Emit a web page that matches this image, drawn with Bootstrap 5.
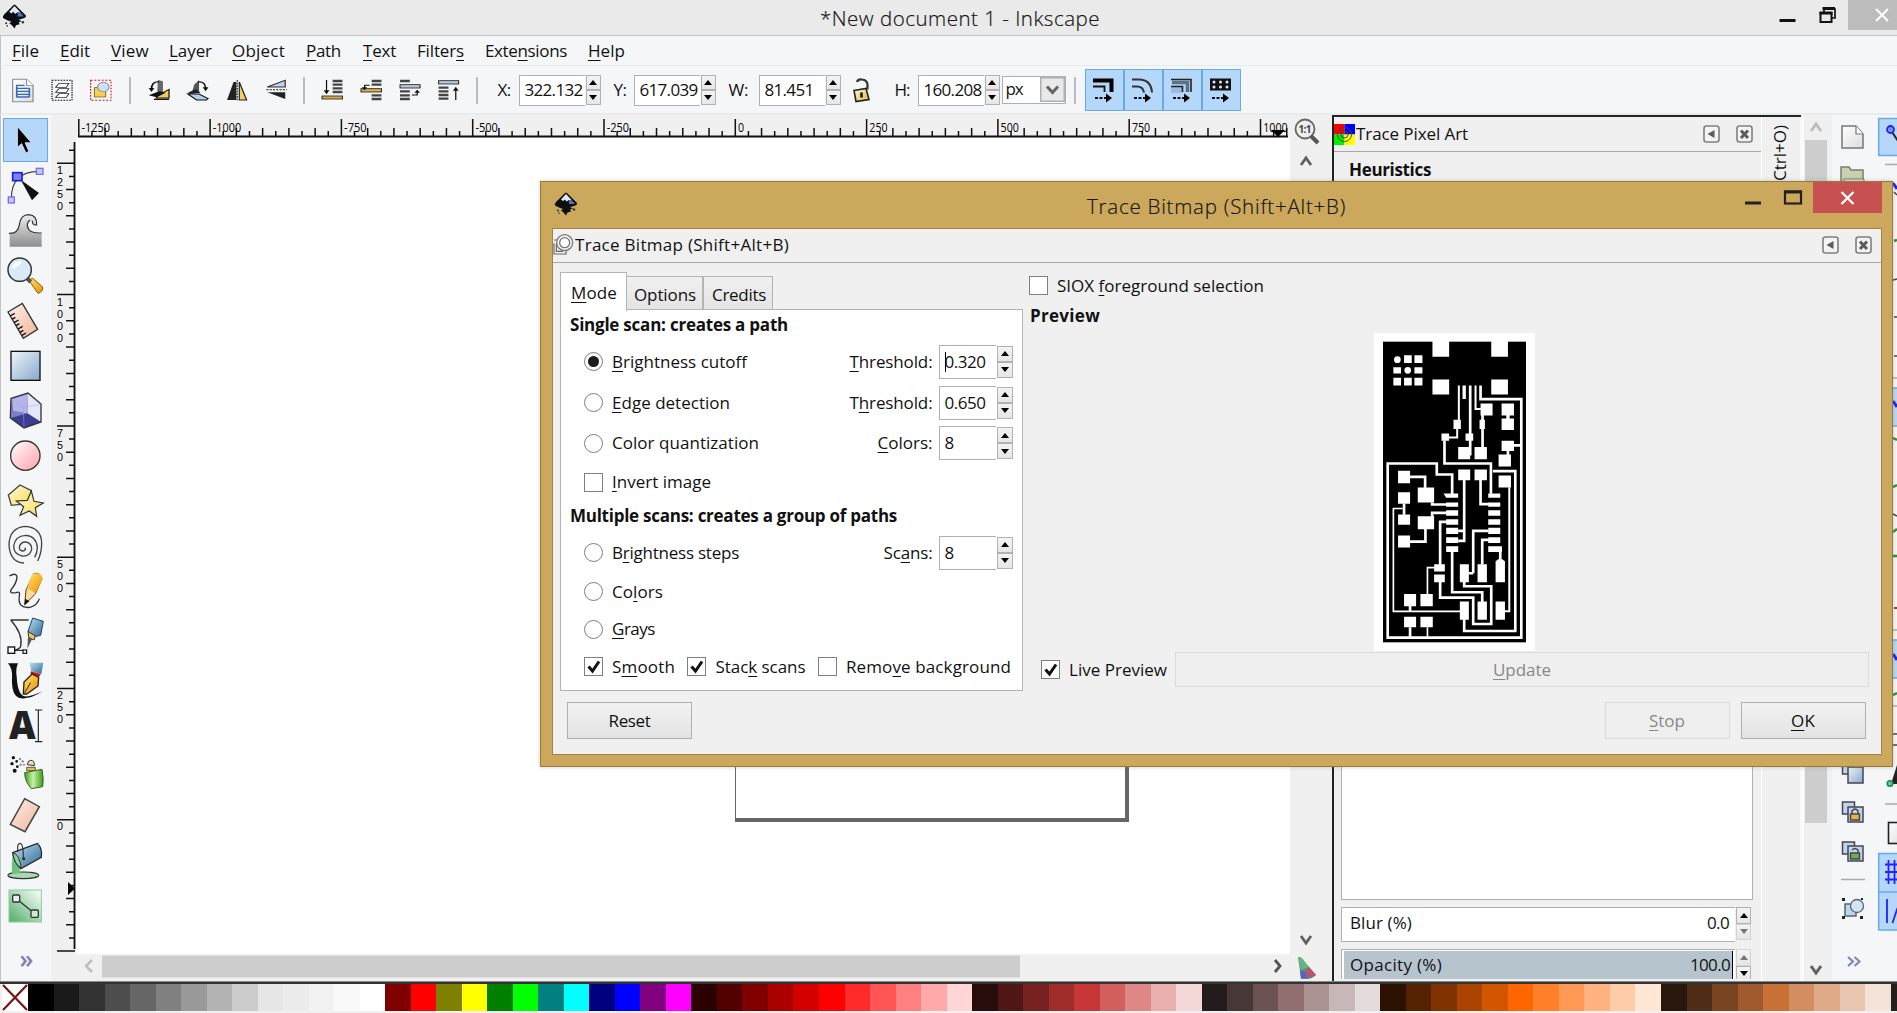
<!DOCTYPE html>
<html lang="en">
<head>
<meta charset="utf-8">
<title>*New document 1 - Inkscape</title>
<link href="https://cdn.jsdelivr.net/npm/bootstrap@5.3.0/dist/css/bootstrap.min.css" rel="stylesheet">
<style>
body{width:1897px;height:1013px;overflow:hidden;background:#f0f0f0;font:17px/22px "Open Sans","Noto Sans",sans-serif;color:#111;position:relative}
svg{display:block;flex:none}
u{text-underline-offset:3px;text-decoration-thickness:1px}
.fit{display:inline-block;white-space:nowrap;flex:none}
.fx{flex:none}
.titlebar{height:36px;background:#eaeaea;border-bottom:1px solid #c3c3c3;flex:none}
.wtitle{font-size:20.5px;line-height:34px;font-weight:300;color:#111;-webkit-text-stroke:.2px #222}
.menubar{height:30px;background:#f4f6f8;border-bottom:1px solid #e6e8ea;border-left:1px solid #c3c3c3;flex:none;padding:0 0 0 10px}
.toolrow{height:49px;background:#f4f6f8;border-bottom:2px solid #e8eaeb;border-left:1px solid #c3c3c3;flex:none;padding:1px 0 0 2.500px}
.slot{width:39px;display:flex;justify-content:center;flex:none}
.vsep{display:flex;justify-content:center;flex:none}
.vsep::after{content:"";width:1.5px;height:27px;background:#b9bbbd}
.entry{background:#fff;border:1.5px solid #adb1b5;border-right:0;overflow:hidden;white-space:nowrap;padding-left:5px;display:flex;align-items:center;flex:none}
.spin{display:flex;flex-direction:column;flex:none;margin-left:1px}
.spin i{flex:1;border:1.5px solid #b2b2b2;background:linear-gradient(#f3f3f3,#e6e6e6);display:flex;align-items:center;justify-content:center}
.spin i::after{content:"";border:4px solid transparent;border-top-width:0;border-bottom:5px solid #000}
.spin i+i::after{border-top:5px solid #000;border-bottom-width:0}
.spin i.off{border-color:#d4d4d4}
.spin i.off::after{border-top-color:#777;border-bottom-color:#777}
.tog{width:39px;height:42px;background:#b5d7fa;border:1.5px solid #6aa9e9;display:flex;align-items:center;justify-content:center;flex:none}
.tools{width:51px;background:#f4f6f8;border-left:1px solid #c3c3c3;flex:none;padding:3px 0 0 2px;height:866px}
.tools svg{width:45px;height:45px}
.tools .on{background:#b5d7fa;border:1.5px solid #6aa9e9;width:45px;height:44px;margin-bottom:1px}
.chev{color:#7d7fb5;font-size:25px;line-height:20px;font-weight:600;letter-spacing:-1px}
.canvas{width:1214px;height:815px;background:#fff;overflow:hidden;position:relative}
.page{position:absolute;left:659px;top:180px;width:394px;height:504px;border:1.5px solid #666;border-right:4px solid #666;border-bottom:4px solid #666}
.dock{width:427px;background:#f0f0f0;flex:none}
.dockhead{height:35px;border-bottom:1.5px solid #a7a7a7;flex:none}
.vert{writing-mode:vertical-rl;transform:rotate(180deg);font-size:17px}
.palette{height:27px;flex:none;overflow:hidden;padding-left:2px}
.palette b{width:25.53px;flex:none;height:27px}
.dlg{position:absolute;left:540px;top:181px;width:1353px;height:586px;background:#cca85c;border:1px solid #97793a;box-shadow:0 0 4px rgba(120,110,90,.35)}
.dlgbody{margin:0 10.5px 0 11px;height:527px;background:#f0f0f0;border:1px solid #a18346;overflow:hidden}
.closeb{width:69px;height:31px;background:#c75050;margin-right:10px}
.opt{height:19px;width:19px;border:1.6px solid #7f7f7f;background:#fff;flex:none;display:flex;align-items:center;justify-content:center}
.opt.rd{border-radius:50%}
.opt.rd.sel::after{content:"";width:11px;height:11px;border-radius:50%;background:#1c1c1c}
.tabx{border:1.5px solid #b4b4b4;background:linear-gradient(#f0f0f0,#e4e4e4);display:flex;align-items:center;flex:none}
.tabx.cur{background:#fff}
.tabbox{width:463px;height:382px;background:#fff;border:1.5px solid #b4b4b4;position:relative;margin-left:7px;padding:0 9px}
.line{display:flex;align-items:center;flex:none}
.pb{height:37px;width:125px;border:1.5px solid #b0b0b0;background:linear-gradient(#f2f2f2,#e3e3e3);display:flex;align-items:center;justify-content:center;flex:none}
.pb.dis{border-color:#dadada;background:#efefef;color:#888}
.sp2 .entry{width:57.5px;height:34px}
.sp2 .spin{width:16px;height:32px}
</style>
<script src="https://cdn.jsdelivr.net/npm/bootstrap@5.3.0/dist/js/bootstrap.bundle.min.js"></script>
</head>
<body class="d-flex flex-column">
<svg width="0" height="0" style="position:absolute">
 <defs>
  <linearGradient id="gB" x1="0" y1="0" x2="1" y2="1"><stop offset="0" stop-color="#f0f5fa"/><stop offset="1" stop-color="#86a9cc"/></linearGradient>
  <linearGradient id="gP" x1="0" y1="0" x2="1" y2="1"><stop offset="0" stop-color="#fff"/><stop offset="1" stop-color="#ff9fa8"/></linearGradient>
  <linearGradient id="gS" x1="0" y1="0" x2="1" y2="1"><stop offset="0" stop-color="#fdf0e9"/><stop offset="1" stop-color="#f0b49c"/></linearGradient>
  <linearGradient id="gY" x1="0" y1="0" x2="1" y2="1"><stop offset="0" stop-color="#fffbd8"/><stop offset="1" stop-color="#f6dc58"/></linearGradient>
  <linearGradient id="gW" x1="0" y1="0" x2="0" y2="1"><stop offset="0" stop-color="#eee"/><stop offset="1" stop-color="#8d8d8d"/></linearGradient>
  <linearGradient id="gG" x1="0" y1="0" x2="1" y2="0"><stop offset="0" stop-color="#3f9a1c"/><stop offset=".45" stop-color="#c9f0a8"/><stop offset="1" stop-color="#3f9a1c"/></linearGradient>
  <linearGradient id="gE" x1="1" y1="0" x2="0" y2="1"><stop offset="0" stop-color="#fff"/><stop offset="1" stop-color="#4fae68"/></linearGradient>
  <linearGradient id="gU" x1="0" y1="0" x2="1" y2="1"><stop offset="0" stop-color="#bfe0ef"/><stop offset="1" stop-color="#2c6796"/></linearGradient>
  <linearGradient id="gD" x1="0" y1="0" x2="1" y2="1"><stop offset="0" stop-color="#fff"/><stop offset="1" stop-color="#ddd"/></linearGradient>
  <linearGradient id="gO" x1="0" y1="0" x2="1" y2="1"><stop offset="0" stop-color="#ffe56a"/><stop offset="1" stop-color="#ee8d00"/></linearGradient>
  <linearGradient id="gL" x1="0" y1="0" x2="1" y2="1"><stop offset="0" stop-color="#fffbd0"/><stop offset="1" stop-color="#dcb83e"/></linearGradient>
  <symbol id="ink" viewBox="0 0 24 24"><path d="M12 .5Q13.500 1 15 3L23 11Q23.500 13 20 14L16 15L19 16.500L16 17.500L17 19.500L13.500 20.500L12 23.500L9.500 20.500L7 18.500L9 17L5 15.500L1 13.500Q.300 12 2 10L9 3Q11 .7 12 .5z" fill="#0c0e12"/><path d="M12 2L7 7.500L9 9L11 7.500L12.500 9.500L15 8L18 8.500z" fill="#e3e9f0"/><path d="M15 8L18 8.500L21 12L15 12z" fill="#4c76b0"/><circle cx="4" cy="18.500" r="1" fill="#333"/><circle cx="20" cy="17.500" r="1.200" fill="#333"/><circle cx="5" cy="21" r=".8" fill="#333"/></symbol>
  <symbol id="dockL" viewBox="0 0 17 18"><rect x="1" y="1" width="15" height="16" rx="2.500" fill="#f4f4f4" stroke="#808080" stroke-width="1.600"/><path d="M11.500 5v8L4.500 9z" fill="#5c5c5c"/></symbol>
  <symbol id="dockX" viewBox="0 0 17 18"><rect x="1" y="1" width="15" height="16" rx="2.500" fill="#f4f4f4" stroke="#808080" stroke-width="1.600"/><path d="M5 5.500l7 7.500M12 5.500L5 13" stroke="#5c5c5c" stroke-width="3"/></symbol>
  <symbol id="chk" viewBox="0 0 16 16"><path d="M2.500 7.500L6.500 12L13 2.500" fill="none" stroke="#111" stroke-width="3"/></symbol>
 </defs>
</svg>

<header class="titlebar d-flex position-relative">
 <svg width="25" height="25" style="margin:4px 0 0 1.500px"><use href="#ink"/></svg>
 <div class="position-absolute wtitle" style="left:820px;top:1px"><span class="fit" data-w="280">*New document 1 - Inkscape</span></div>
 <svg class="ms-auto" width="130" height="36" viewBox="1767 0 130 36"><rect x="1848" width="49" height="30" fill="#bcbcbc"/><path d="M1779.500 20.500h16" stroke="#111" stroke-width="3"/><path d="M1824 12V9h11v9h-4" fill="none" stroke="#111" stroke-width="1.700"/><path d="M1822.500 8.500h12.500" stroke="#111" stroke-width="3"/><rect x="1820.500" y="13" width="11" height="9" fill="none" stroke="#111" stroke-width="2"/><path d="M1819.500 13h13" stroke="#111" stroke-width="3"/><path d="M1876 9l12 12M1888 9l-12 12" stroke="#fff" stroke-width="2"/></svg>
</header>

<nav class="menubar d-flex align-items-center" id="menu"></nav>

<div class="toolrow d-flex align-items-center">
 <div class="slot"><svg width="24" height="26" viewBox="26 231 58.800 78" preserveAspectRatio="none"><path d="M30 238h34l16 18v49H30z" fill="url(#gD)" stroke="#8c8c8c" stroke-width="3"/><path d="M64 238v18h16" fill="#fff" stroke="#8c8c8c" stroke-width="2.500"/><path d="M39 256h20M39 265h32M39 274h32M39 283h32M39 291h32M40 256v35M71 265v26" stroke="#3468bd" stroke-width="4"/></svg></div>
 <div class="slot"><svg width="24" height="26" viewBox="121 231 58.800 78" preserveAspectRatio="none"><rect x="126" y="241" width="49" height="60" fill="none" stroke="#111" stroke-width="3" stroke-dasharray="4 3"/><path d="M135 262l8-12h24l-6 12zM135 277l8-11h24l-6 11zM135 292l8-11h24l-6 11z" fill="#fff" stroke="#333" stroke-width="2.500"/></svg></div>
 <div class="slot"><svg width="24" height="26" viewBox="217 231 58.800 78" preserveAspectRatio="none"><rect x="221" y="241" width="50" height="60" fill="none" stroke="#e01b1b" stroke-width="3" stroke-dasharray="5 4"/><rect x="230" y="263" width="28" height="28" fill="#f6cf4e" stroke="#6c5000" stroke-width="2"/><circle cx="252" cy="261" r="14" fill="#cfe0f2" stroke="#7788a0" stroke-width="2.500"/></svg></div>
 <div class="vsep" style="width:19px"></div>
 <div class="slot"><svg width="24" height="26" viewBox="357 231 58.800 78" preserveAspectRatio="none"><path d="M384 240l12 4v38l-14-8z" fill="#666"/><path d="M384 286l27-18v26H380z" fill="#f4cd53" stroke="#111" stroke-width="3"/><path d="M361 286l26-12 16 4-22 14z" fill="#111"/><path d="M374 298h37" stroke="#111" stroke-width="4"/><path d="M386 246q-18-2-18 22" fill="none" stroke="#111" stroke-width="4"/><path d="M361 264h14l-7 12z" fill="#111"/></svg></div>
 <div class="slot"><svg width="24" height="26" viewBox="452 231 58.800 78" preserveAspectRatio="none"><path d="M484 240l-12 14-6 26 18-4z" fill="#555"/><path d="M456 282l28 0 22 14-4 4H478z" fill="#b7cfe6" stroke="#111" stroke-width="3"/><path d="M456 278l20-10 12 10-26 4z" fill="#222"/><path d="M482 246q18-2 18 20" fill="none" stroke="#111" stroke-width="4"/><path d="M493 262h14l-7 12z" fill="#111"/></svg></div>
 <div class="slot"><svg width="24" height="26" viewBox="547 231 58.800 78" preserveAspectRatio="none"><path d="M568 246h7v54h-23z" fill="#222"/><path d="M582 246l18 54h-18z" fill="#f1cf62" stroke="#222" stroke-width="3"/><path d="M577 240v64" stroke="#111" stroke-width="2.500" stroke-dasharray="5 3"/></svg></div>
 <div class="slot"><svg width="24" height="26" viewBox="644 231 58.800 78" preserveAspectRatio="none"><path d="M652 261l44-20v20z" fill="#c3d4e6" stroke="#333" stroke-width="3"/><path d="M650 269h50" stroke="#111" stroke-width="3" stroke-dasharray="5 3"/><path d="M652 277h44v20z" fill="#222"/></svg></div>
 <div class="vsep" style="width:17px"></div>
 <div class="slot"><svg width="24" height="26" viewBox="783 231 58.800 78" preserveAspectRatio="none"><path d="M814 243h24M814 254h24M814 265h24M814 276h24" stroke="#444" stroke-width="7"/><rect x="788" y="288" width="50" height="9" fill="#d9ad49" stroke="#222" stroke-width="2.500"/><path d="M799 240v38" stroke="#111" stroke-width="3"/><path d="M792 271h14l-7 12z" fill="#111"/></svg></div>
 <div class="slot"><svg width="24" height="26" viewBox="878 231 58.800 78" preserveAspectRatio="none"><path d="M909 243h24M909 254h24M909 286h24M909 297h24" stroke="#444" stroke-width="7"/><rect x="883" y="266" width="50" height="10" fill="#d9ad49" stroke="#222" stroke-width="2.500"/><path d="M892 268v-12h12" fill="none" stroke="#111" stroke-width="3"/><path d="M885 262h13l-7 9z" fill="#111"/></svg></div>
 <div class="slot"><svg width="24" height="26" viewBox="974 231 58.800 78" preserveAspectRatio="none"><path d="M979 243h24M979 274h24M979 286h24M979 297h24" stroke="#444" stroke-width="7"/><rect x="979" y="254" width="49" height="10" fill="#b8c6d6" stroke="#222" stroke-width="2.500"/><path d="M1008 285h13v-10" fill="none" stroke="#111" stroke-width="3"/><path d="M1014 278h14l-7-9z" fill="#111"/></svg></div>
 <div class="slot"><svg width="24" height="26" viewBox="1071 231 58.800 78" preserveAspectRatio="none"><path d="M1075 263h24M1075 274h24M1075 285h24M1075 296h24" stroke="#444" stroke-width="7"/><rect x="1075" y="242" width="49" height="10" fill="#b8c6d6" stroke="#222" stroke-width="2.500"/><path d="M1117 300v-34" stroke="#111" stroke-width="3"/><path d="M1110 272h14l-7-12z" fill="#111"/></svg></div>
 <div class="vsep" style="width:17px"></div>
 <div class="fx" style="width:33px;padding-left:12px"><span class="fit" data-w="13">X:</span></div>
 <div class="entry" style="width:66px;height:31px"><span class="fit" data-w="58">322.132</span></div><div class="spin" style="width:15px;height:30px"><i></i><i></i></div>
 <div class="fx" style="width:33px;padding-left:13px"><span class="fit" data-w="13">Y:</span></div>
 <div class="entry" style="width:66px;height:31px"><span class="fit" data-w="58">617.039</span></div><div class="spin" style="width:15px;height:30px"><i></i><i></i></div>
 <div class="fx" style="width:43px;padding-left:13px"><span class="fit" data-w="20">W:</span></div>
 <div class="entry" style="width:66px;height:31px"><span class="fit" data-w="49">81.451</span></div><div class="spin" style="width:15px;height:30px"><i></i><i></i></div>
 <div class="slot" style="width:42px"><svg width="20" height="26" viewBox="0 0 20 26"><path d="M5 5q1-3 5-2.500q5 .5 5.500 5v5" fill="none" stroke="#333" stroke-width="2.200"/><path d="M2 13.500l12-2 3 11-13 2z" fill="url(#gL)" stroke="#222" stroke-width="1.600"/><path d="M9.500 15.500v5" stroke="#111" stroke-width="2.500"/></svg></div>
 <div class="fx" style="width:35px;padding-left:12px"><span class="fit" data-w="15">H:</span></div>
 <div class="entry" style="width:66px;height:31px"><span class="fit" data-w="58">160.208</span></div><div class="spin" style="width:15px;height:30px"><i></i><i></i></div>
 <div class="d-flex bg-white fx" style="width:64px;height:28px;margin-left:2px;border:1.500px solid #adb1b5"><span class="fit me-auto" style="margin-left:3px;line-height:24px" data-w="17">px</span><svg width="25" height="25" viewBox="0 0 25 25"><rect x="0" y="0" width="25" height="25" fill="#e9e9e9" stroke="#b0b0b0" stroke-width="3"/><path d="M7 9.500l5.500 6 5.500-6" fill="none" stroke="#666" stroke-width="3"/></svg></div>
 <div class="vsep" style="width:19px"></div>
 <div class="tog"><svg width="24" height="26" viewBox="0 0 24 26"><path d="M1 3.500h18.500V15" fill="none" stroke="#000" stroke-width="4"/><path d="M1 9.500h11.500V15" fill="none" stroke="#111" stroke-width="1.800"/><path d="M3 21h11" stroke="#111" stroke-width="2" stroke-dasharray="3 1.500"/><path d="M14 16.500l6 4.500-6 4.500z"/></svg></div>
 <div class="tog"><svg width="24" height="26" viewBox="0 0 24 26"><path d="M1 2.500h7q12 0 13 13M1 9.500h5q6 0 7 6" fill="none" stroke="#333" stroke-width="2.200"/><path d="M3 21h11" stroke="#111" stroke-width="2" stroke-dasharray="3 1.500"/><path d="M14 16.500l6 4.500-6 4.500z"/></svg></div>
 <div class="tog"><svg width="24" height="26" viewBox="0 0 24 26"><path d="M1 9h11v7H1z" fill="#9dbbdb"/><path d="M1 2.500h20V15M1 9.500h11.500V15" fill="none" stroke="#222" stroke-width="1.600"/><path d="M2 5.500h15.500V15" fill="none" stroke="#5d7084" stroke-width="3.500"/><path d="M3 21h11" stroke="#111" stroke-width="2" stroke-dasharray="3 1.500"/><path d="M14 16.500l6 4.500-6 4.500z"/></svg></div>
 <div class="tog"><svg width="24" height="26" viewBox="0 0 24 26"><path d="M1 1.500h21v12H1z" fill="#111"/><g fill="#dcebfa"><circle cx="5" cy="5" r="1.500"/><circle cx="11.500" cy="5" r="1.500"/><circle cx="18" cy="5" r="1.500"/><circle cx="5" cy="10" r="1.500"/><circle cx="11.500" cy="10" r="1.500"/><circle cx="18" cy="10" r="1.500"/></g><path d="M3 21h11" stroke="#111" stroke-width="2" stroke-dasharray="3 1.500"/><path d="M14 16.500l6 4.500-6 4.500z"/></svg></div>
</div>

<main class="d-flex fx" style="height:866px">
 <div class="tools d-flex flex-column">
  <svg class="on" viewBox="9 22 135 135"><path d="M51 47v66l13-12 14 30 9-5-12-28h20z" fill="#000" stroke="#fff" stroke-width="2"/></svg>
  <svg viewBox="9 157 135 135"><path d="M34 268Q32 182 118 182" fill="none" stroke="#444" stroke-width="3.500"/><path d="M62 207l55 40-21 22z" fill="#111"/><g fill="#c8c8ff" stroke="#6f6fff" stroke-width="4"><rect x="25" y="259" width="18" height="18"/><rect x="109" y="173" width="20" height="18"/></g><rect x="38" y="186" width="28" height="24" fill="#7b86d8" stroke="#1a1aff" stroke-width="5"/></svg>
  <svg viewBox="9 292 135 135"><path d="M29 369Q56 370 58 342Q62 312 86 312Q112 314 110 346Q104 348 100 338Q96 328 86 332Q80 345 90 362Q96 368 125 368V408H29z" fill="url(#gW)"/><path d="M27 368Q54 370 58 342Q62 312 86 312Q112 314 110 343Q96 344 97 330M90 328Q76 338 86 356Q92 368 125 367" fill="none" stroke="#333" stroke-width="3.500"/></svg>
  <svg viewBox="9 427 135 135"><path d="M86 508l12-5 30 26q2 14-14 19z" fill="url(#gO)" stroke="#8a5a00" stroke-width="3"/><path d="M82 504l10 10" stroke="#555" stroke-width="12"/><circle cx="59" cy="477" r="35" fill="#dbe8f6" stroke="#333" stroke-width="4.500"/><path d="M34 474Q38 450 66 451Q60 470 34 474z" fill="#f8fbff"/></svg>
  <svg viewBox="9 562 135 135"><path d="M24 604L67 578 113 656 70 683z" fill="url(#gS)" stroke="#333" stroke-width="4"/><path d="M30 616l14-8M36 626l10-6M42 636l14-8M48 645l10-6M54 655l14-8M60 665l10-6M66 674l12-7" stroke="#111" stroke-width="4"/></svg>
  <svg viewBox="9 697 135 135"><rect x="33" y="722" width="87" height="87" fill="url(#gB)" stroke="#111" stroke-width="4"/></svg>
  <svg viewBox="9 832 135 135"><path d="M33 863L84 847 123 880V934L72 952 31 922z" fill="#9d9ddc"/><path d="M84 847L123 880V934L82 908z" fill="#e6e6fb"/><path d="M33 863L84 847 82 908 31 922z" fill="#7d7dc8"/><path d="M84 849L82 908 40 900 36 865z" fill="#b4b4ea"/><path d="M31 922L82 908 123 934 72 952z" fill="#3c3c94"/><path d="M33 863L84 847 123 880V934L72 952 31 922z" fill="none" stroke="#333" stroke-width="4"/><path d="M34 865L70 890 72 950M70 890L122 881" fill="none" stroke="#a5a5dc" stroke-width="1.500"/></svg>
  <svg viewBox="9 967 135 135"><circle cx="76" cy="1035" r="44" fill="url(#gP)" stroke="#333" stroke-width="4"/></svg>
  <svg viewBox="9 1102 135 135"><path d="M25 1153L60 1123 94 1140 88 1178 34 1184z" fill="url(#gY)" stroke="#444" stroke-width="4"/><path d="M94 1141l8 31 28 5-24 14 4 26-22-16-28 13 11-26-22-17 33-2z" fill="url(#gY)" stroke="#333" stroke-width="3.500"/></svg>
  <svg viewBox="9 -56 135 135"><path d="M74 18q6 6-3 10q-14 0-13-12q4-16 20-15q18 4 17 22q-6 22-28 20q-26-4-26-30q4-30 36-32q32 2 35 36q0 16-8 30" fill="none" stroke="#444" stroke-width="4"/><path d="M27 10Q28-42 76-46q48 4 49 50q0 30-12 54M27 10Q30 62 72 64" fill="none" stroke="#444" stroke-width="4"/></svg>
  <svg viewBox="9 82 135 135"><path d="M28 106q22-12 23 4q-2 18-17 36q-8 14 14 10q14-6 10 10q-6 38 32 34q22-6 28-26" fill="none" stroke="#333" stroke-width="4"/><path d="M74 192l4-44 22-48q20-8 26 14L106 160z" fill="#fbd9a0" stroke="#5a4200" stroke-width="3"/><path d="M80 146l16-46q26-8 32 14l-22 46q-10-14-26-14z" fill="url(#gO)"/><path d="M73 194l3-20 12 8z" fill="#111"/></svg>
  <svg viewBox="9 217 135 135"><path d="M32 238H86M32 238Q70 280 62 318Q56 328 40 329H72" fill="none" stroke="#333" stroke-width="4"/><rect x="24" y="319" width="20" height="19" fill="#fff" stroke="#111" stroke-width="4"/><rect x="69" y="328" width="11" height="10" fill="#fff" stroke="#111" stroke-width="3.500"/><path d="M98 232l32 10-8 42-18 4-20-16z" fill="url(#gU)" stroke="#1b4466" stroke-width="3"/><path d="M84 272l22 14-4 12-16-8z" fill="#f1c855" stroke="#333" stroke-width="3"/><path d="M84 290l12 6-14 28z" fill="#555"/></svg>
  <svg viewBox="9 352 135 135"><path d="M24 368h30q-8 18-4 38q2 50 20 60q16 6 58-14q-40 26-70 20q-24-8-22-60q2-28-12-44z" fill="#111"/><path d="M88 366h42l-6 34-30-8z" fill="url(#gU)"/><path d="M92 392l30 8-4 8-26-8z" fill="#c01818"/><path d="M70 460l2-36 24-24 20 10-2 26-34 24z" fill="url(#gO)" stroke="#222" stroke-width="4"/><path d="M74 456l18-30" stroke="#222" stroke-width="3"/></svg>
  <svg viewBox="9 487 135 135" overflow="visible"><text x="27" y="596" font-family="Open Sans,sans-serif" font-weight="800" font-size="116" textLength="80" lengthAdjust="spacingAndGlyphs" fill="#222">A</text><path d="M105 508h22M105 603h22M115 508v95" stroke="#222" stroke-width="3.500"/></svg>
  <svg viewBox="9 622 135 135"><path d="M82 672q2-14 10-13q12 0 11 16z" fill="#e9e0c0" stroke="#333" stroke-width="3"/><path d="M80 680h26v10H80z" fill="#e6bb46" stroke="#444" stroke-width="2.500"/><path d="M74 696l52-10q6 30 2 52l-34 6Q74 722 74 696z" fill="url(#gG)" stroke="#2e6b16" stroke-width="3"/><g fill="#111"><circle cx="40" cy="651" r="5"/><circle cx="36" cy="669" r="5"/><circle cx="50" cy="662" r="4"/><circle cx="44" cy="690" r="6"/><circle cx="52" cy="678" r="4"/></g><g fill="#888"><circle cx="60" cy="655" r="3.500"/><circle cx="68" cy="662" r="3.500"/><circle cx="62" cy="672" r="3.500"/><circle cx="72" cy="672" r="3"/></g></svg>
  <svg viewBox="9 757 135 135"><path d="M74 774l44 24-43 75-44-22z" fill="url(#gS)" stroke="#444" stroke-width="4.500"/></svg>
  <svg viewBox="9 892 135 135"><ellipse cx="70" cy="1004" rx="46" ry="10" fill="#a9d9b4" stroke="#333" stroke-width="3.500"/><path d="M38 940q-4 30-2 60l26-2q-8-24 4-18z" fill="#6dbf84"/><path d="M38 936L112 908q16 14 12 42L62 984Q42 964 38 936z" fill="url(#gU)" stroke="#222" stroke-width="3.500"/><path d="M38 936q20 4 26 46q-20-8-26-46z" fill="#8fcf9d" stroke="#333" stroke-width="3"/><path d="M54 934q-4-26 6-26t10 42" fill="none" stroke="#333" stroke-width="3.500"/><circle cx="71" cy="954" r="5" fill="#333"/></svg>
  <svg viewBox="9 1027 135 135"><rect x="27" y="1048" width="97" height="96" fill="url(#gE)" stroke="#8ccb9b" stroke-width="3"/><path d="M54 1078l44 36" stroke="#333" stroke-width="4"/><rect x="38" y="1063" width="21" height="21" rx="3" fill="#eee" stroke="#333" stroke-width="4"/><rect x="93" y="1108" width="22" height="22" rx="3" fill="#cfe8d4" stroke="#333" stroke-width="4"/></svg>
  <div class="chev text-center" style="margin-top:20px;padding-right:2px">»</div>
 </div>

 <div class="d-flex flex-column fx" style="width:1239px">
  <svg id="rulH" width="1239" height="23" viewBox="51 115 1239 23"></svg>
  <div class="d-flex">
   <svg id="rulV" width="25" height="815" viewBox="51 138 25 815"></svg>
   <div class="canvas"><div class="page"></div></div>
  </div>
  <svg width="1239" height="28" viewBox="51 953 1239 28"><rect x="51" y="953" width="1239" height="28" fill="#f0f0f0"/><path d="M76 953.500h1214" stroke="#fafafa" stroke-width="2"/><rect x="102" y="955.500" width="918" height="22" fill="#cdcdcd"/><path d="M92 960l-6 6 6 6" fill="none" stroke="#bdbdbd" stroke-width="2.500"/><path d="M1275 960l5 6-5 6" fill="none" stroke="#555" stroke-width="2.800"/></svg>
 </div>

 <svg width="42" height="866" viewBox="1290 115 42 866"><rect x="1290" y="115" width="43" height="866" fill="#f0f0f0"/><circle cx="1305" cy="129" r="9.500" fill="#eee" stroke="#666" stroke-width="1.800"/><path d="M1311 136l7 7" stroke="#555" stroke-width="4"/><text x="1298.500" y="133" font-size="10" font-weight="700" fill="#444" textLength="13">1:1</text><path d="M1301 165l5-7 5 7M1301 936l5 7 5-7" fill="none" stroke="#606060" stroke-width="2.800"/><path d="M1298 957q4 0 6 4l12 14q-6 6-15 3z" fill="#5c8a86"/><path d="M1298 957q4 0 6 4l5 6-8 3z" fill="#63b583"/><path d="M1309 967l7 8-7 3-4-6z" fill="#b5566a"/><path d="M1300 971l5 1 3 6-7 1z" fill="#6060c0"/></svg>

 <div class="d-flex fx" style="width:469px;border-top:2px solid #222;border-left:2px solid #222">
  <div class="dock d-flex flex-column">
   <div class="dockhead d-flex align-items-center">
    <svg width="21" height="21" viewBox="0 0 21 21"><path d="M0 0h10.500v10.500H0z" fill="#f00"/><path d="M10.500 0H21v10.500H10.500z" fill="#00f"/><path d="M0 10.500h10.500V21H0z" fill="#0e0"/><path d="M10.500 10.500H21V21H10.500z" fill="#ff0"/><circle cx="10.500" cy="10.500" r="7" fill="none" stroke="#443" stroke-width="1"/><circle cx="10.500" cy="10.500" r="3.500" fill="none" stroke="#443" stroke-width="1"/></svg>
    <span class="fit" style="margin-left:1px" data-w="112">Trace Pixel Art</span>
    <svg class="ms-auto" width="17" height="18"><use href="#dockL"/></svg><svg width="17" height="18" style="margin:0 8px 0 16px"><use href="#dockX"/></svg>
   </div>
   <div class="fw-bold" style="margin:7px 0 0 15px"><span class="fit" data-w="82">Heuristics</span></div>
   <div class="bg-white mt-auto" style="height:150px;width:412px;margin-left:7px;border:1.500px solid #adb1b5"></div>
   <div class="d-flex fx" style="margin:7px 0 0 7px;height:35px"><div class="entry" style="width:394px;height:35px;padding:0 6px 3px 8px"><span class="fit me-auto" data-w="62">Blur (%)</span><span class="fit" data-w="22">0.0</span></div><div class="spin" style="width:15px;height:33px"><i></i><i class="off"></i></div></div>
   <div class="d-flex fx overflow-hidden" style="margin:7px 0 2px 7px;height:30px"><div class="entry fx" style="width:394px;height:36px;padding:2px"><div class="d-flex w-100" style="background:#b6c4ce;height:33px;padding:3px 2px 0 6px;border-right:1.500px solid #000"><span class="fit me-auto" data-w="92">Opacity (%)</span><span class="fit" data-w="40">100.0</span></div></div><div class="spin" style="width:15px;height:33px"><i class="off"></i><i></i></div></div>
  </div>
  <div class="fx d-flex justify-content-center overflow-hidden" style="width:40px;border-left:1px solid #fff;border-right:1px solid #fafafa;padding-right:3px"><div style="padding-top:8px"><span class="vert fit">Ctrl+O)</span></div></div>
 </div>
 <svg width="31" height="866" viewBox="1801 115 31 866"><rect x="1801" y="115" width="31" height="866" fill="#f0f0f0"/><path d="M1802.500 115v866" stroke="#fff" stroke-width="2"/><rect x="1805" y="140" width="22" height="683" fill="#cdcdcd"/><path d="M1811 131l5-7 5 7" fill="none" stroke="#bcbcbc" stroke-width="2.800"/><path d="M1811 966l5 7 5-7" fill="none" stroke="#606060" stroke-width="3"/></svg>
 <svg width="65" height="866" viewBox="1832 115 65 866"><rect x="1832" y="115" width="65" height="866" fill="#f4f6f8"/>
  <path d="M1842 126h14l7 8v14h-21z" fill="url(#gD)" stroke="#777" stroke-width="1.500"/><path d="M1856 126v8h7" fill="#fff" stroke="#777" stroke-width="1.200"/>
  <path d="M1841 184v-17h8l2 3h12v14" fill="#c8cfb2" stroke="#77806a" stroke-width="1.500"/><path d="M1844 184v-5h20v5" fill="#dfe4d0" stroke="#77806a"/>
  <g stroke="#445" stroke-width="1.500"><g fill="#c3d6e8"><path d="M1842.500 760h12v14h-12z"/><path d="M1848 767h15v16h-15z" fill="url(#gB)"/></g><g fill="#c3d6e8"><path d="M1842.500 802h12v12h-12z"/><path d="M1848 807h15v15h-15z"/><path d="M1852 814v-3q3-4 6 0v3" fill="none"/><path d="M1850.500 814h9v6h-9z" fill="#eab532"/></g><g fill="#c3d6e8"><path d="M1842.500 842h12v12h-12z"/><path d="M1848 846h15v15h-15z"/><path d="M1852 850q3-3 6 0v3" fill="none"/><path d="M1850.500 853h9v6h-9z" fill="#6fb044"/></g></g>
  <path d="M1841 879.500h24" stroke="#aaa" stroke-width="1.500"/>
  <path d="M1845 904h11v12h-11z" fill="#c3d6e8" stroke="#567" stroke-width="1.500"/><circle cx="1857" cy="906" r="6.500" fill="#d6e4f2" stroke="#567" stroke-width="1.300"/><path d="M1842 898h3v3h-3zM1861 898h2v2h-2zM1842 916h3v3h-3zM1860 916h3v3h-3z" fill="#222"/>
  <g fill="none" stroke="#8385bd" stroke-width="2.200"><path d="M1848 957l5 4.500-5 4.500M1854.500 957l5 4.500-5 4.500"/></g>
  <g fill="#b5d7fa" stroke="#6aa9e9" stroke-width="1.500"><path d="M1878.700 118.500h26v37h-26zM1878.700 388h26v38h-26zM1878.700 640h26v38h-26zM1878.700 853.500h26v38.500h-26zM1878.700 892h26v38h-26z"/></g>
  <path d="M1892 132l6 9" stroke="#222" stroke-width="2"/><circle cx="1890.500" cy="129.500" r="3.500" fill="#7b90f5" stroke="#22f" stroke-width="1.800"/>
  <path d="M1885 164.500h12M1885 378h12M1885 630h12M1885 706h12M1885 804h12" stroke="#aaa" stroke-width="1.500"/>
  <path d="M1893 183l4 6M1893 401l4 6M1893 654l4 6" stroke="#22f" stroke-width="3"/><path d="M1894 192l3 3M1893 280l4-1M1894 317h3M1894 356h3M1893 514l4 2M1893 734h4M1893 745h4" stroke="#444" stroke-width="1.500"/>
  <path d="M1894 241l3-1M1893 438l4 2M1893 487l4-2M1893 532l4-3M1893 556h4M1893 695l4-2" stroke="#289038" stroke-width="2.500"/><path d="M1894 608h3" stroke="#d22" stroke-width="2"/>
  <path d="M1891 784l6-19v19z" fill="#222"/><circle cx="1890" cy="783.500" r="2.800" fill="#5ca" stroke="#284" stroke-width="1.500"/>
  <rect x="1888.500" y="822.500" width="18" height="21" fill="url(#gD)" stroke="#222" stroke-width="1.600"/>
  <path d="M1888.500 860v24M1894.500 860v24M1885 864.500h12M1885 872h12M1885 879.500h12" stroke="#22f" stroke-width="1.800"/><path d="M1887 899v24M1892.500 923l5-15" stroke="#22f" stroke-width="1.800"/>
 </svg>
</main>
<div class="fx" style="height:3px;background:#333;border-top:1px solid #8a8a8a"></div>
<div class="palette d-flex" id="pal"><svg width="26" height="27"><rect width="26" height="27" fill="#fff"/><path d="M1 1l24 25M25 1L1 26" stroke="#7a1414" stroke-width="2.200"/></svg></div>

<section class="dlg">
 <div class="d-flex position-relative" style="height:46px">
  <svg width="24" height="24" style="margin:10px 0 0 13px"><use href="#ink"/></svg>
  <div class="position-absolute wtitle" style="left:546px;top:7px"><span class="fit" data-w="259">Trace Bitmap (Shift+Alt+B)</span></div>
  <svg class="ms-auto" width="70" height="31" viewBox="1743 182.500 70 31"><path d="M1745 203.500h16" stroke="#222" stroke-width="3"/><rect x="1785" y="192" width="16" height="12" fill="none" stroke="#222" stroke-width="2.200"/><path d="M1784 192.500h18" stroke="#222" stroke-width="3"/></svg>
  <div class="closeb d-flex align-items-center justify-content-center"><svg width="16" height="14"><path d="M1.500 1l12 12M13.500 1l-12 12" stroke="#fff" stroke-width="2.300"/></svg></div>
 </div>
 <div class="dlgbody">
  <div class="dockhead d-flex align-items-center" style="height:33.500px">
   <svg width="21" height="22" viewBox="0 0 63 66"><path d="M3 18h14M3 28v32h36V48M10 30v22h20" fill="none" stroke="#666" stroke-width="3.500"/><circle cx="35" cy="26" r="24" fill="#f4f4f4" stroke="#777" stroke-width="4"/><circle cx="35" cy="26" r="15" fill="#fff" stroke="#777" stroke-width="4"/></svg>
   <span class="fit" style="margin-left:1px" data-w="214">Trace Bitmap (Shift+Alt+B)</span>
   <svg class="ms-auto" width="17" height="18"><use href="#dockL"/></svg><svg width="17" height="18" style="margin:0 9px 0 16px"><use href="#dockX"/></svg>
  </div>
  <div class="d-flex">
   <div style="width:475px" class="fx">
    <div class="d-flex align-items-end position-relative" style="height:46px;margin-left:7px;z-index:2">
     <div class="tabx cur" style="width:67px;height:39px;border-bottom:0;padding:2px 0 0 10px;margin-bottom:-2px"><span class="fit" data-w="46"><u>M</u>ode</span></div>
     <div class="tabx" style="width:76px;height:33px;border-left:0;padding:4px 0 0 7px;border-bottom:0"><span class="fit" data-w="62">Options</span></div>
     <div class="tabx" style="width:70px;height:33px;padding:4px 0 0 8px;border-bottom:0"><span class="fit" data-w="54">Credits</span></div>
    </div>
    <div class="tabbox">
     <div class="fw-bold line" style="height:31px"><span class="fit" data-w="218">Single scan: creates a path</span></div>
     <div id="opts" style="padding-left:14px"></div>
    </div>
   </div>
   <div class="flex-grow-1 d-flex flex-column">
    <div class="line" style="margin:13px 0 0 1px;height:20px"><span class="opt"></span><span class="fit" style="margin-left:9px" data-w="207">SIOX <u>f</u>oreground selection</span></div>
    <div class="fw-bold" style="margin:9px 0 0 2px;line-height:22px"><span class="fit" data-w="70">Preview</span></div>
    <svg width="161" height="318" viewBox="42 38 482 953" preserveAspectRatio="none" style="margin:6px 0 0 346px">
     <rect x="42" y="38" width="482" height="953" fill="#fff"/><rect x="69" y="64" width="428" height="901" fill="#000"/>
     <g fill="#fff"><path d="M217 60h50v49h-50zM393 60h50v49h-50zM217 177h50v45h-50zM393 177h50v45h-50z"/>
     <circle cx="112" cy="118" r="10"/><circle cx="143" cy="150" r="10"/><path d="M132 105h23v23h-23zM163 105h24v23h-24zM100 141h23v18h-23zM163 141h24v18h-24zM100 172h23v23h-23zM132 172h23v23h-23zM163 172h24v23h-24z"/>
     <path d="M307 195h10v41h-10zM361 249h36v36h-36zM424 249h37v36h-37zM424 294h37v35h-37zM438 284h10v12h-10zM280 298h22v28h-22zM358 298h16v28h-16zM244 339h23v22h-23zM316 339h23v22h-23zM294 380h36v36h-36zM343 380h37v36h-37zM424 361h37v31h-37zM415 402h37v36h-37zM294 447h36v32h-36zM343 447h37v32h-37zM415 465h37v36h-37z"/>
     <path d="M114 451h36v37h-36zM173 501h49v45h-49zM114 515h36v35h-36zM114 582h36v31h-36zM173 587h49v39h-49zM114 645h36v36h-36z"/>
     <path d="M250 519h44v13h-36zM258 546h36v13h-36zM258 569h36v17h-36zM258 596h36v17h-36zM258 622h36v18h-36zM258 650h36v17h-36zM258 677h36v17h-36zM384 519h36v13h-36zM384 546h36v13h-36zM384 569h36v17h-36zM384 596h36v17h-36zM384 622h36v18h-36zM384 650h36v17h-36zM384 677h41v17h-41z"/>
     <path d="M222 731h32v22h-32zM222 762h32v23h-32zM299 731h27v54h-27zM352 731h28v54h-28zM406 722l8-6h12l8 6v63h-28zM299 843h27v54h-27zM352 843h28v54h-28zM406 843h28v54h-28zM132 820h36v37h-36zM181 820h37v37h-37zM132 888h36v32h-36zM181 888h37v32h-37z"/></g>
     <g fill="none" stroke="#fff" stroke-width="8"><path d="M361 195v41h122v715H83V429h147v33h46v60M253 360v69h139v91M398 452h67v479H312v-38M330 195v210M367 283v100M460 375h22M443 390v15M150 469h45v34M216 546v6h45M196 625v38h-48M216 590v-13h45M132 549v34M240 740V604h20M312 478v183h-18M294 631h18M361 478v73h25M339 758V631h46M325 758h14M366 732v-74h20M420 685v36M276 692v123h90v30M312 784v13h81v113h-54v-79H240v-48M150 920v30M150 856v16"/><path d="M296 195v104M291 326v25h-26M346 195v71h16M447 500v372h-14" stroke-width="6"/><path d="M128 564h-28v308h200M223 741h-21v80M202 920v30" stroke-width="5"/></g>
    </svg>
    <div class="line" style="height:36px;margin:1px 0 0 13px"><span class="opt"><svg width="16" height="16"><use href="#chk"/></svg></span><span class="fit" style="margin-left:9px" data-w="98">Live Preview</span><div class="pb dis" style="width:694px;height:35px;margin-left:8px"><span class="fit" data-w="58"><u>U</u>pdate</span></div></div>
   </div>
  </div>
  <div class="d-flex" style="padding:11.500px 15px 0 14px"><div class="pb me-auto"><span class="fit" data-w="42">Reset</span></div><div class="pb dis" style="margin-right:11px"><span class="fit" data-w="36"><u>S</u>top</span></div><div class="pb"><span class="fit" data-w="24"><u>O</u>K</span></div></div>
 </div>
</section>

<script>
// menu entries: gap before, rendered width, label
document.getElementById('menu').innerHTML=[[1,27,'<u>F</u>ile'],[21,30,'<u>E</u>dit'],[21,38,'<u>V</u>iew'],[20,43,'<u>L</u>ayer'],[20,53,'<u>O</u>bject'],[21,35,'<u>P</u>ath'],[22,33,'<u>T</u>ext'],[21,47,'Filter<u>s</u>'],[21,82,'Exte<u>n</u>sions'],[21,37,'<u>H</u>elp']]
 .map(m=>`<span class="fit" style="margin-left:${m[0]}px" data-w="${m[1]}">${m[2]}</span>`).join('');

// option rows of the Mode tab
const tick='<svg width="16" height="16"><use href="#chk"/></svg>';
const sp=(l,w,v,vw,cur)=>`<span class="fit ms-auto" data-w="${w}">${l}</span><div class="d-flex align-items-center sp2" style="margin:0 0 0 6px"><div class="entry">${cur?'<span style="width:1.5px;height:20px;background:#000;margin-right:-1.5px"></span>':''}<span class="fit" data-w="${vw}">${v}</span></div><div class="spin"><i></i><i></i></div></div>`;
const row=(h,c,w,t,x='')=>`<div class="line" style="height:${h}px"><span class="opt ${c}"></span><span class="fit" style="margin-left:9px" data-w="${w}">${t}</span>${x}</div>`;
document.getElementById('opts').innerHTML=
 row(42,'rd sel',135,'<u>B</u>rightness cutoff',sp('<u>T</u>hreshold:',83,'0.320',41,1))+
 row(40,'rd',118,'<u>E</u>dge detection',sp('T<u>h</u>reshold:',83,'0.650',41))+
 row(41,'rd',147,'Color quantization',sp('<u>C</u>olors:',55,'8',10))+
 row(37,'',99,'<u>I</u>nvert image')+
 '<div class="fw-bold line" style="height:30px;margin-left:-14px"><span class="fit" data-w="327">Multiple scans: creates a group of paths</span></div>'+
 row(44,'rd',127,'B<u>r</u>ightness steps',sp('Sc<u>a</u>ns:',49,'8',10))+
 row(34,'rd',51,'Co<u>l</u>ors')+row(41,'rd',43,'<u>G</u>rays')+
 `<div class="line" style="height:34px"><span class="opt">${tick}</span><span class="fit" style="margin-left:9px" data-w="63">S<u>m</u>ooth</span><span class="opt" style="margin-left:12.5px">${tick}</span><span class="fit" style="margin-left:9px" data-w="90">Stac<u>k</u> scans</span><span class="opt" style="margin-left:12.5px"></span><span class="fit" style="margin-left:9px" data-w="165">Remo<u>v</u>e background</span></div>`;

// swatches
document.getElementById('pal').insertAdjacentHTML('beforeend',('000000 1a1a1a 333333 4d4d4d 666666 808080 999999 b3b3b3 cccccc e6e6e6 ececec f2f2f2 f9f9f9 ffffff 800000 ff0000 808000 ffff00 008000 00ff00 008080 00ffff 000080 0000ff 800080 ff00ff 2b0000 550000 800000 aa0000 d40000 ff0000 ff2a2a ff5555 ff8080 ffaaaa ffd5d5 280b0b 501616 782121 a02c2c c83737 d35f5f de8787 e9afaf f4d7d7 241c1c 483737 6c5353 916f6f ac9393 c8b7b7 e3dbdb 2b1100 552200 803300 aa4400 d45500 ff6600 ff7f2a ff9955 ffb380 ffccaa ffe6d5 28170b 502d16 784421 a05a2c c87137 d38d5f deaa87 e9c6af f4e3d7 241f1c').split(' ').map(c=>`<b style="background:#${c}"></b>`).join(''));

// rulers
let h='<rect x="51" y="115" width="1239" height="23" fill="#f0f0f0"/><path d="M78 136.500h1210" stroke="#111" stroke-width="1.800"/>',v='<rect x="51" y="138" width="25" height="815" fill="#f0f0f0"/><path d="M74.500 142v807" stroke="#111" stroke-width="1.800"/>',p='',q='';
for(let i=0;i<=92;i++){const x=78.8+i*13.13;if(x<1288)p+=`M${x} 136V${i%10==0?119:i%2?131:128}`;}
['-1250','-1000','-750','-500','-250','0','250','500','750','1000'].forEach((t,i)=>{h+=`<text x="${81.5+i*131.3}" y="131.500" font-size="12" textLength="${t.length*6.1-(t[0]=='-'?2:0)}" lengthAdjust="spacingAndGlyphs">${t}</text>`});
for(let i=-1;i<=60;i++){const y=163.3+i*13.13;if(y<952)q+=`M75 ${y}H${i%10==0?57:i%2?69:66}`;}
['1250','1000','750','500','250','0'].forEach((t,i)=>[...t].forEach((c,j)=>v+=`<text x="57" y="${174.3+i*131.2+j*12}" font-family="Liberation Sans,sans-serif" font-size="10.8">${c}</text>`));
document.getElementById('rulH').innerHTML=h+`<path d="${p}" stroke="#111" stroke-width="1.500"/><path d="M1271 130h14l-7 7z"/>`;
document.getElementById('rulV').innerHTML=v+`<path d="${q}" stroke="#111" stroke-width="1.500"/><path d="M68 882v13l7-6.500z"/>`;

// tighten tracking so each label takes its design width
document.querySelectorAll('[data-w]').forEach(e=>{const n=e.textContent.length;e.style.letterSpacing=((+e.dataset.w-e.getBoundingClientRect().width)/n)+'px'});
</script>
</body>
</html>
